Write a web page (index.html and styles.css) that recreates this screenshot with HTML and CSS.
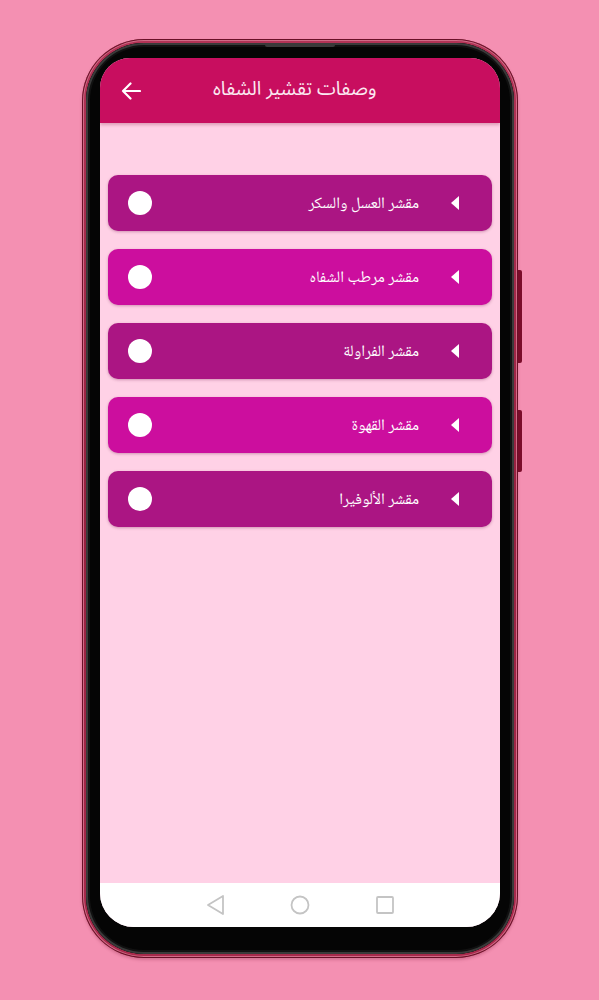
FILE: index.html
```html
<!DOCTYPE html>
<html lang="ar">
<head>
<meta charset="utf-8">
<title>وصفات تقشير الشفاه</title>
<link rel="stylesheet" href="styles.css">
</head>
<body>
<div class="stage">
  <div class="phone">
    <div class="speaker"></div>
    <div class="btn btn-a"></div>
    <div class="btn btn-b"></div>
    <div class="bezel">
      <div class="screen">
        <header class="appbar">
          <svg class="back" width="20" height="18" viewBox="0 0 20 18" aria-hidden="true">
            <path d="M19 9H2M9.5 1.5L2 9l7.5 7.5" fill="none" stroke="#fff" stroke-width="2.2" stroke-linecap="round" stroke-linejoin="round"/>
          </svg>
          <h1 class="title">وصفات تقشير الشفاه</h1>
        </header>
        <main class="content">
          <ul class="list">
            <li class="item dark"><span class="tri"></span><span class="label">مقشر العسل والسكر</span><span class="dot"></span></li>
            <li class="item light"><span class="tri"></span><span class="label">مقشر مرطب الشفاه</span><span class="dot"></span></li>
            <li class="item dark"><span class="tri"></span><span class="label">مقشر الفراولة</span><span class="dot"></span></li>
            <li class="item light"><span class="tri"></span><span class="label">مقشر القهوة</span><span class="dot"></span></li>
            <li class="item dark"><span class="tri"></span><span class="label">مقشر الألوفيرا</span><span class="dot"></span></li>
          </ul>
        </main>
        <nav class="navbar">
          <svg width="22" height="24" viewBox="0 0 22 24" aria-hidden="true"><path d="M19 3L4 12l15 9z" fill="none" stroke="#c4c4c4" stroke-width="1.8" stroke-linejoin="round"/></svg>
          <svg width="22" height="22" viewBox="0 0 22 22" aria-hidden="true"><circle cx="11" cy="11" r="8.5" fill="none" stroke="#c4c4c4" stroke-width="1.8"/></svg>
          <svg width="22" height="22" viewBox="0 0 22 22" aria-hidden="true"><rect x="3" y="3" width="16" height="16" rx="1" fill="none" stroke="#c4c4c4" stroke-width="1.8"/></svg>
        </nav>
      </div>
    </div>
  </div>
</div>
</body>
</html>
```

FILE: styles.css
```css
* { box-sizing: border-box; }
html, body { margin: 0; padding: 0; }
body {
  background: #f490b2;
  width: 599px;
  height: 1000px;
  overflow: hidden;
  font-family: "DejaVu Sans", "Noto Sans", sans-serif;
}
.stage {
  padding: 39px 0 0 82px;
}
.phone {
  position: relative;
  width: 436px;
  height: 919px;
  border-radius: 62px;
  padding: 4px;
  background: linear-gradient(180deg, #b23356 0%, #96203f 50%, #a82a4c 100%);
  box-shadow: inset 0 0 0 1px #6a1028, inset 0 0 0 2px #d06a86, 0 2px 3px rgba(120,20,50,0.25);
}
.speaker {
  position: absolute;
  left: 183px;
  top: 4px;
  width: 70px;
  height: 4px;
  border-radius: 2px;
  background: #3a3a3a;
  z-index: 2;
}
.btn {
  position: absolute;
  right: -4px;
  width: 4px;
  background: #7a0c2a;
  border-radius: 0 2px 2px 0;
}
.btn-a { top: 231px; height: 93px; }
.btn-b { top: 371px; height: 62px; }
.bezel {
  height: 100%;
  border-radius: 58px;
  background: #050505;
  padding: 15px 14px 27px 14px;
  box-shadow: inset 0 0 0 2px #3a3a3a, inset 0 0 0 4px #111;
}
.screen {
  height: 100%;
  border-radius: 30px 30px 34px 34px;
  overflow: hidden;
  display: flex;
  flex-direction: column;
  background: #ffd1e6;
}
.appbar {
  height: 65px;
  flex: none;
  background: #c80e5f;
  display: flex;
  align-items: center;
  padding: 0 0 0 21px;
  box-shadow: 0 2px 3px rgba(120,0,40,0.25);
  position: relative;
  z-index: 1;
}
.back { flex: none; margin-top: 1px; }
.title {
  margin: 0 0 0 72px;
  font-family: "Noto Sans Arabic", "Noto Sans", "DejaVu Sans", sans-serif;
  font-size: 19px;
  font-weight: normal;
  color: #fbe9f1;
  direction: rtl;
  line-height: 1;
  padding-bottom: 3px;
}
.content {
  flex: 1;
  padding: 52px 8px 0 8px;
}
.list {
  list-style: none;
  margin: 0;
  padding: 0;
  display: flex;
  flex-direction: column;
  gap: 18px;
}
.item {
  direction: rtl;
  height: 56px;
  border-radius: 10px;
  display: flex;
  align-items: center;
  padding: 0 33px 0 20px;
  box-shadow: 0 1px 3px rgba(100,0,60,0.3);
}
.item.dark { background: #ab1583; }
.item.light { background: #cc0e9e; }
.tri {
  flex: none;
  width: 0;
  height: 0;
  border-top: 7px solid transparent;
  border-bottom: 7px solid transparent;
  border-right: 8px solid #ffffff;
}
.label {
  flex: 1;
  margin-right: 32px;
  color: #ffffff;
  font-family: "Noto Naskh Arabic", "DejaVu Sans", serif;
  font-size: 16px;
  padding-top: 3px;
}
.dot {
  flex: none;
  width: 24px;
  height: 24px;
  border-radius: 50%;
  background: #ffffff;
}
.navbar {
  height: 44px;
  flex: none;
  background: #ffffff;
  display: flex;
  align-items: center;
  justify-content: center;
  gap: 63px;
}
```
